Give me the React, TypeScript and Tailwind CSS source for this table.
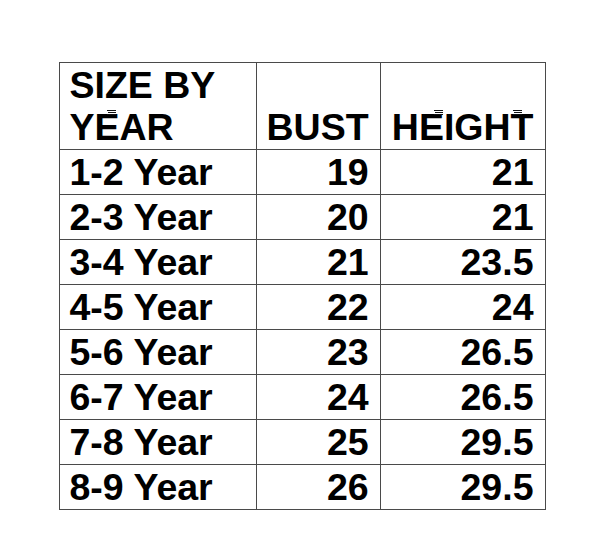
const rows = [
  ["1-2 Year", "19", "21"],
  ["2-3 Year", "20", "21"],
  ["3-4 Year", "21", "23.5"],
  ["4-5 Year", "22", "24"],
  ["5-6 Year", "23", "26.5"],
  ["6-7 Year", "24", "26.5"],
  ["7-8 Year", "25", "29.5"],
  ["8-9 Year", "26", "29.5"],
];

// tiny triple-bar marks sitting over some header letters
const Marks = ({ className }: { className: string }) => (
  <svg className={`absolute ${className}`} width="9" height="6" viewBox="0 0 9 6">
    <rect x="0" y="0" width="9" height="1" fill="#111" />
    <rect x="1" y="2" width="8" height="1" fill="#111" />
    <rect x="0" y="4" width="9" height="1" fill="#111" />
  </svg>
);

export default function App() {
  return (
    <div className="min-h-[560px] w-[604px] bg-white pt-[62px]">
      <table
        className="mx-auto w-[487px] border-collapse text-[37.5px] font-bold leading-[42px] text-black"
        style={{ fontFamily: '"Liberation Sans", Arial, sans-serif' }}
      >
        <colgroup>
          <col className="w-[198px]" />
          <col className="w-[124px]" />
          <col className="w-[165px]" />
        </colgroup>
        <thead>
          <tr>
            <th className="relative border border-[#4a4a4a] py-[1px] pl-[10px] text-left align-bottom font-bold">
              SIZE BY
              <br />
              YEAR
              <Marks className="left-[47px] top-[47px]" />
            </th>
            <th className="border border-[#4a4a4a] py-[1px] pr-[11px] text-right align-bottom font-bold">BUST</th>
            <th className="relative border border-[#4a4a4a] py-[1px] pr-[11px] text-right align-bottom font-bold">
              HEIGHT
              <Marks className="left-[53px] top-[47px]" />
              <Marks className="left-[132px] top-[47px]" />
            </th>
          </tr>
        </thead>
        <tbody>
          {rows.map((r) => (
            <tr key={r[0]}>
              <td className="border border-[#4a4a4a] py-[1px] pl-[10px] text-left">{r[0]}</td>
              <td className="border border-[#4a4a4a] py-[1px] pr-[11px] text-right">{r[1]}</td>
              <td className="border border-[#4a4a4a] py-[1px] pr-[11px] text-right">{r[2]}</td>
            </tr>
          ))}
        </tbody>
      </table>
    </div>
  );
}
